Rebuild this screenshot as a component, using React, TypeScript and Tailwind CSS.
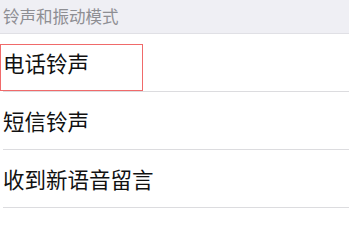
import React from "react";

const rows = ["电话铃声", "短信铃声", "收到新语音留言"];

export default function App() {
  return (
    <div
      className="w-[349px] h-[216px] overflow-hidden bg-white"
      style={{ fontFamily: '"Noto Sans CJK SC", "Noto Sans", sans-serif' }}
    >
      <div className="h-[34px] bg-[#efeff4] border-b border-[#e0e0e5] flex items-center pl-[3px]">
        <span className="text-[16.5px] leading-none text-[#8e8e93]">铃声和振动模式</span>
      </div>
      <div className="flex flex-col">
        {rows.map((r, i) => (
          <div key={r} className="relative h-[58px] flex items-center pl-[3px] pt-[0px]">
            <span className="text-[21.5px] leading-none text-[#111]">{r}</span>
            <div className="absolute left-[3px] right-0 bottom-0 h-px bg-[#dcdcdf]" />
            {i === 0 && (
              <div className="absolute left-0 top-[10px] w-[143px] h-[47px] border-[1.5px] border-[#f06a6a]" />
            )}
          </div>
        ))}
      </div>
    </div>
  );
}
